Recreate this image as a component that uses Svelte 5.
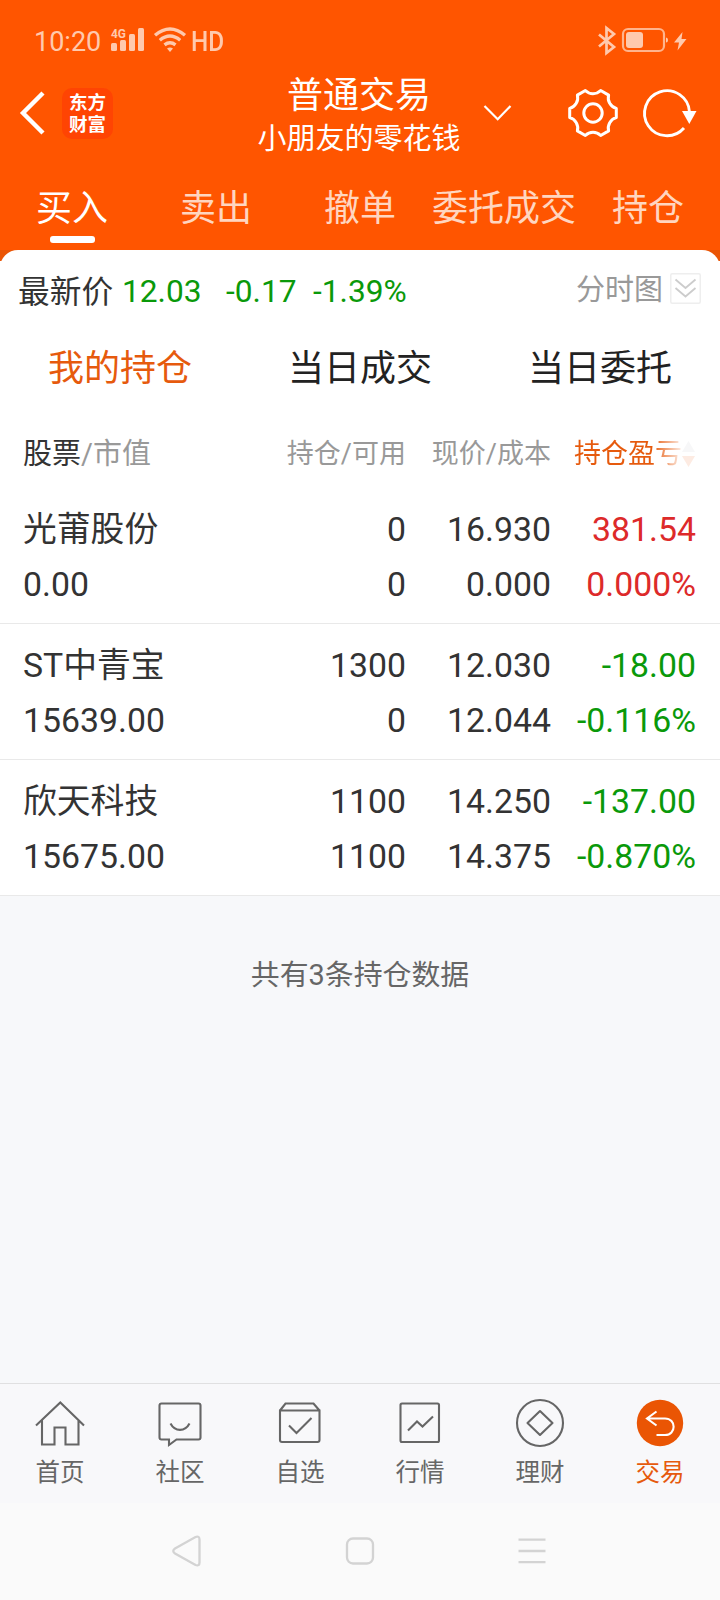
<script>
  const tabs = ['买入', '卖出', '撤单', '委托成交', '持仓'];
  const subTabs = ['我的持仓', '当日成交', '当日委托'];
  const rows = [
    { name: '光莆股份', value: '0.00', hold: '0', avail: '0', price: '16.930', cost: '0.000', pl: '381.54', pct: '0.000%', dir: 'up' },
    { name: 'ST中青宝', value: '15639.00', hold: '1300', avail: '0', price: '12.030', cost: '12.044', pl: '-18.00', pct: '-0.116%', dir: 'down' },
    { name: '欣天科技', value: '15675.00', hold: '1100', avail: '1100', price: '14.250', cost: '14.375', pl: '-137.00', pct: '-0.870%', dir: 'down' }
  ];
  const nav = [
    { id: 'home', label: '首页' },
    { id: 'community', label: '社区' },
    { id: 'watch', label: '自选' },
    { id: 'market', label: '行情' },
    { id: 'wealth', label: '理财' },
    { id: 'trade', label: '交易' }
  ];

  // Six flat teeth joined by inward curves.
  function gearPath() {
    const rot = (x, y, k) => {
      const a = (-k * Math.PI) / 3;
      return `${(x * Math.cos(a) - y * Math.sin(a)).toFixed(2)} ${(x * Math.sin(a) + y * Math.cos(a)).toFixed(2)}`;
    };
    let d = `M${rot(23.3, 4.6, 0)}`;
    for (let k = 0; k < 6; k++) {
      d += `L${rot(23.3, -4.6, k)}C${rot(17.5, -6.2, k)} ${rot(14.1, -12.1, k)} ${rot(23.3, 4.6, k + 1)}`;
    }
    return d + 'Z';
  }
</script>

<div class="screen">
  <header>
    <div class="status">
      <span class="time">10:20</span>
      <svg class="signal" width="34" height="26" viewBox="0 0 34 26">
        <text x="0" y="10.5" font-size="12" font-weight="700" textLength="15" lengthAdjust="spacingAndGlyphs">4G</text>
        <rect x="0" y="16" width="6" height="8" rx="1.5" /><rect x="9" y="13" width="6" height="11" rx="1.5" />
        <rect x="18" y="7" width="6" height="17" rx="1.5" /><rect x="27" y="1" width="6" height="23" rx="1.5" />
      </svg>
      <svg class="wifi" width="34" height="28" viewBox="0 0 34 28" fill="none" stroke-width="3.4">
        <path d="M2 9.3Q17-3.3 32 9.3M6.8 14.2Q17 5.8 27.2 14.2M11.5 18.8Q17 14.6 22.5 18.8" />
        <path d="M14 22.4Q17 20.4 20 22.4L17 26Z" class="solid" />
      </svg>
      <span class="hd">HD</span>
      <svg class="power" width="90" height="32" viewBox="0 0 90 32" fill="none">
        <path d="M2 9.5L17 22 9.5 28V3L17 9 2 21.5" stroke-width="2.7" />
        <rect x="26" y="4" width="41" height="22" rx="5" stroke-width="2.2" class="edge" />
        <rect x="29" y="7" width="17" height="16" rx="3" class="solid" />
        <path d="M69 12.5Q71 12.5 71 15T69 17.500Z" class="solid" />
        <path d="M85.500 7L77 17.500H82L80.500 25.500 89.500 14H84.500Z" class="solid" />
      </svg>
    </div>

    <div class="titlebar">
      <svg class="back" width="26" height="44" viewBox="0 0 26 44"><path d="M24 2L4 22 24 42" fill="none" stroke="#fff" stroke-width="4.400" /></svg>
      <div class="logo"><span>东方</span><span>财富</span></div>
      <div class="title"><div class="main">普通交易</div><div class="account">小朋友的零花钱</div></div>
      <svg class="caret" width="28" height="18" viewBox="0 0 28 18"><path d="M.5 1L13.700 14.300 26.500 1" fill="none" stroke="#fff" stroke-width="2.200" /></svg>
      <svg class="gear" width="52" height="52" viewBox="-26 -26 52 52" fill="none" stroke="#fff" stroke-width="3" stroke-linejoin="round">
        <path d={gearPath()} /><circle r="9.200" />
      </svg>
      <svg class="refresh" width="56" height="52" viewBox="-26 -26 56 52" fill="none" stroke="#fff" stroke-width="2.900">
        <path d="M17 15A22.500 22.500 0 1 1 22.500 -1" /><path d="M15 -2H29.500L22.300 11Z" fill="#fff" stroke="none" />
      </svg>
    </div>

    <nav class="tabs">
      {#each tabs as tab, i}
        <div class="tab" class:active={i === 0}>{tab}</div>
      {/each}
    </nav>
  </header>

  <div class="backing">
    <section class="card">
      <div class="quote">
        <span class="lead">最新价</span><span class="q1">12.03</span><span class="q2">-0.17</span><span class="q3">-1.39%</span>
        <span class="chart">分时图</span>
        <svg width="31" height="31" viewBox="0 0 31 31" fill="none">
          <rect x=".75" y=".75" width="29.500" height="29.500" rx="1.500" stroke="#eee" stroke-width="1.500" />
          <path d="M5.500 6.500L15.500 15 25.500 6.500M5.500 15L15.500 23.500 25.500 15" stroke="#ccc" stroke-width="1.800" />
        </svg>
      </div>
      <div class="subtabs">
        {#each subTabs as tab, i}
          <div class:current={i === 0}>{tab}</div>
        {/each}
      </div>
      <div class="grid head">
        <div class="first"><b>股票</b>/市值</div>
        <div>持仓/可用</div>
        <div>现价/成本</div>
        <div class="sorted">
          <span>持仓盈亏</span>
          <svg width="13" height="26" viewBox="0 0 13 26"><path d="M0 11L6.500 0 13 11Z" fill="#f7f7f8" /><path d="M0 15H13L6.500 26Z" fill="#fdebe2" /></svg>
        </div>
      </div>
      {#each rows as r}
        <div class="grid row">
          <div>{r.name}</div><div>{r.hold}</div><div>{r.price}</div><div class={r.dir}>{r.pl}</div>
          <div>{r.value}</div><div>{r.avail}</div><div>{r.cost}</div><div class={r.dir}>{r.pct}</div>
        </div>
      {/each}
    </section>
  </div>

  <main><p>共有3条持仓数据</p></main>

  <nav class="bottom">
    {#each nav as item}
      <div class="item" class:on={item.id === 'trade'}>
        <svg width="50" height="50" viewBox="0 0 50 50" fill="none" stroke="#666" stroke-width="2.100">
          {#if item.id === 'home'}
            <path d="M1 25.500L25.300 2.500 49 25.500M7 20.500V44.500H19.500V27.500H30.500V44.500H43.500V20.500" />
          {:else if item.id === 'community'}
            <path d="M6.500 3.500H43.500Q45.500 3.500 45.500 5.500V37.500Q45.500 39.500 43.500 39.500H21.500L14 45V39.500H6.500Q4.500 39.500 4.500 37.500V5.500Q4.500 3.500 6.500 3.500ZM15.500 23.500C20 32 30 32 34.500 23.500" />
          {:else if item.id === 'watch'}
            <path d="M5 10.500L10.500 3.500H38.500L44.500 10.500M5 10.500H44.500V40Q44.500 42 42.500 42H7Q5 42 5 40ZM14 25.500L21.500 33 36.500 18" />
          {:else if item.id === 'market'}
            <rect x="5.500" y="3.500" width="38.500" height="38.500" rx="1.500" />
            <path d="M13 30.500L22 21.500 27.500 26.500 38 16.500" />
          {:else if item.id === 'wealth'}
            <circle cx="25" cy="23" r="23" /><path d="M25 11L37.500 23 25 35 12.500 23Z" stroke-linejoin="round" />
          {:else}
            <circle cx="25" cy="23" r="23.200" fill="#ea5504" stroke="none" />
            <path d="M21.500 11.500L12 18.500 21.500 25.500M12 18.500H30C41.500 18.500 41.500 35 30 35H21.500" stroke="#fff" />
          {/if}
        </svg>
        <span>{item.label}</span>
      </div>
    {/each}
  </nav>

  <div class="system">
    <svg width="30" height="32" viewBox="0 0 30 32"><path d="M2 13.500L22.500 2Q26.500 .5 26.500 4.500V27.500Q26.500 31.500 22.500 30L2 18.500Q-1.500 16 2 13.500Z" /></svg>
    <svg width="30" height="30" viewBox="0 0 30 30"><rect x="2" y="2.500" width="26" height="25" rx="6" /></svg>
    <svg width="30" height="30" viewBox="0 0 30 30"><path d="M1.500 3.700H28.500M1.500 15H28.500M1.500 26.200H28.500" /></svg>
  </div>
</div>

<style>
  .screen {
    width: 720px;
    height: 1600px;
    display: flex;
    flex-direction: column;
    overflow: hidden;
    background: #f7f8fa;
    color: #333;
    font-family: Roboto, 'Noto Sans CJK SC', sans-serif;
    white-space: nowrap;
  }
  svg { display: block; flex: none; overflow: visible; }
  header { height: 250px; background: #ff5500; color: #fff; }
  .status {
    height: 82px;
    box-sizing: border-box;
    padding: 24px 33px 24px 34px;
    display: flex;
    align-items: flex-start;
    color: #ffc9ad;
    font-size: 27px;
    line-height: 36px;
  }
  .status svg { fill: #ffc9ad; }
  .status .wifi, .status .power { fill: none; stroke: #ffc9ad; }
  .status .solid { fill: #ffc9ad; stroke: none; }
  .status .edge { stroke: #ffb48d; }
  .time { width: 77px; }
  .signal { margin: 3px 8px 0 0; }
  .wifi { margin: 2px 4px 0 0; }
  .hd { transform: scaleX(.9); transform-origin: left; font-weight: 500; }
  .power { margin: 1px 0 0 auto; }
  .titlebar {
    height: 88px;
    box-sizing: border-box;
    padding: 5px 0 0 19px;
    display: grid;
    grid-template-columns: 43px 51px 371px 83px 74px 56px;
    align-items: start;
  }
  .back { margin-top: 4px; }
  .logo {
    width: 51px;
    height: 51px;
    border-radius: 10px;
    background: #ff4403;
    display: flex;
    flex-direction: column;
    align-items: center;
    justify-content: center;
    font-size: 18.500px;
    font-weight: 700;
    line-height: 22px;
    margin-top: 1px;
  }
  .title { text-align: center; margin-left: 121px; width: 250px; margin-top: -13px; }
  .main { font-size: 36px; line-height: 44px; }
  .account { font-size: 29px; line-height: 43px; }
  .caret { margin: 18px 0 0 0; }
  .tabs { display: flex; height: 80px; }
  .tab { width: 144px; text-align: center; font-size: 36px; line-height: 79px; color: #ffd6c0; }
  .tab.active { color: #fff; }
  .tab.active::after { content: ''; display: block; width: 45px; height: 7px; margin: -13px auto 0; border-radius: 3px; background: #fff; }
  .backing { background: linear-gradient(#ea5505 11px, #fff 11px); }
  .card { height: 646px; background: #fff; border-radius: 18px 18px 0 0; }
  .quote { height: 80px; padding: 0 19px 0 18px; display: flex; align-items: center; font-size: 31.700px; color: #0a990a; }
  .quote svg { margin: -4px 0 0 7px; }
  .lead { width: 104px; margin-top: -3px; color: #333; }
  .q1 { width: 104px; margin-top: 2px; }
  .q2 { width: 87px; margin-top: 2px; }
  .q3 { margin-top: 2px; }
  .chart { margin: -6px 0 0 auto; font-size: 29px; color: #999; }
  .subtabs { display: grid; grid-template-columns: repeat(3, 240px); height: 78px; line-height: 79px; font-size: 36px; text-align: center; color: #222; }
  .current { color: #e65a0d; }
  .grid { display: grid; grid-template-columns: 219px 164px 145px 145px; padding: 0 24px 0 23px; }
  .grid > div { text-align: right; }
  .head { height: 80px; line-height: 92px; font-size: 27px; color: #999; }
  .grid > .first { text-align: left; font-size: 29px; }
  b { font-weight: 400; color: #333; }
  .sorted { display: flex; justify-content: flex-end; align-items: center; height: 92px; margin-right: 1px; }
  .sorted span { background: linear-gradient(90deg, #e65a0d 72%, #fff 103%); background-clip: text; color: transparent; }
  .row { height: 136px; box-sizing: border-box; padding-top: 14px; grid-template-rows: 55px 55px; line-height: 55px; font-size: 33.800px; border-bottom: 1px solid #e9e9e9; }
  .row > div:nth-child(4n + 1) { text-align: left; }
  .up { color: #dd2a2a; }
  .down { color: #0a990a; }
  main { flex: 1; text-align: center; color: #666; font-size: 28.900px; }
  p { margin: 57px 0 0; line-height: 44px; }
  .bottom { height: 120px; padding-top: 16px; box-sizing: border-box; border-top: 1px solid #e0e0e1; background: #f8f8fa; display: flex; }
  .item { width: 120px; display: flex; flex-direction: column; align-items: center; font-size: 24.500px; line-height: 36px; color: #666; }
  .item span { margin-top: 5px; }
  .item.on { color: #e65a0d; }
  .system { height: 97px; background: #fafafa; display: flex; justify-content: space-between; align-items: center; padding: 0 173px 1px; box-sizing: border-box; }
  .system svg { fill: none; stroke: #d3d3d3; stroke-width: 2.300; }
</style>
